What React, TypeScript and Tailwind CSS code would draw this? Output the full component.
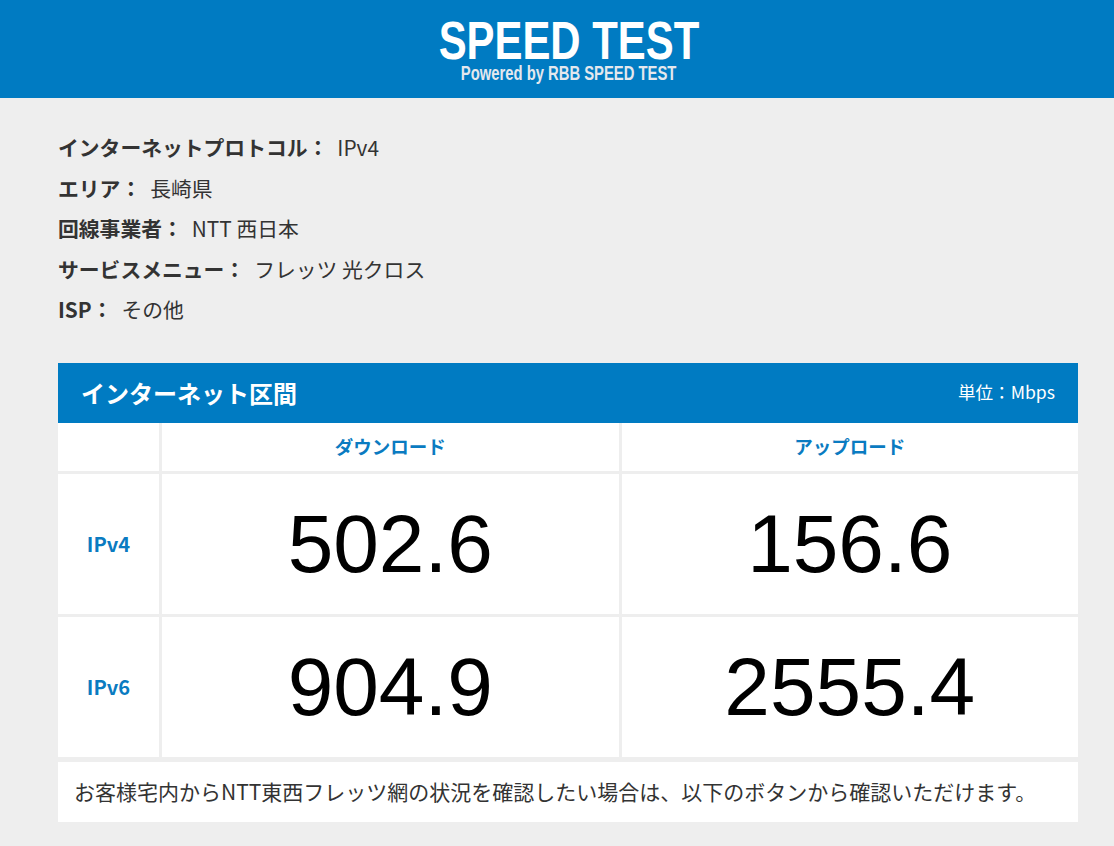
import React from "react";

const jp = { fontFamily: '"Noto Sans CJK JP", "Noto Sans", sans-serif' };
const logo = { fontFamily: '"Liberation Sans", Arial, sans-serif' };

const info: [string, string][] = [
  ["インターネットプロトコル：", "IPv4"],
  ["エリア：", "長崎県"],
  ["回線事業者：", "NTT 西日本"],
  ["サービスメニュー：", "フレッツ 光クロス"],
  ["ISP：", "その他"],
];

const rows: [string, string, string][] = [
  ["IPv4", "502.6", "156.6"],
  ["IPv6", "904.9", "2555.4"],
];

export default function App() {
  return (
    <div className="min-h-screen bg-[#eeeeee] text-[#333333]" style={jp}>
      <header className="h-[98px] bg-[#007bc2] flex flex-col items-center pt-[19px] pl-[23px]">
        <div
          className="text-white font-bold text-[53px] leading-[44px] scale-x-[0.79] whitespace-nowrap"
          style={logo}
        >
          SPEED TEST
        </div>
        <div
          className="text-[#e4e8ee] font-bold text-[20px] leading-[18px] mt-[1px] scale-x-[0.74] whitespace-nowrap"
          style={logo}
        >
          Powered by RBB SPEED TEST
        </div>
      </header>

      <main className="px-[58px] pt-[29px] pb-[26px]">
        <ul className="text-[20.8px] leading-[40.5px]">
          {info.map(([k, v]) => (
            <li key={k}>
              <span className="font-bold">{k}</span>
              <span className="ml-[9px]">{v}</span>
            </li>
          ))}
        </ul>

        <section className="mt-[33px] w-[1020px]">
          <div className="h-[60px] bg-[#007bc2] flex items-center justify-between pl-[23px] pr-[23px] text-white">
            <span className="font-bold text-[24px]">インターネット区間</span>
            <span className="text-[17.6px]">単位：Mbps</span>
          </div>
          <div className="grid grid-cols-[101px_1fr_1fr] gap-[3px] bg-[#eeeeee]">
            <div className="bg-white h-[48px]" />
            <div className="bg-white h-[48px] flex items-center justify-center text-[#0a7bc1] font-bold text-[18.5px]">
              ダウンロード
            </div>
            <div className="bg-white h-[48px] flex items-center justify-center text-[#0a7bc1] font-bold text-[18.5px]">
              アップロード
            </div>
            {rows.map(([label, down, up]) => (
              <React.Fragment key={label}>
                <div className="bg-white h-[140px] flex items-center justify-center text-[#0a7bc1] font-bold text-[20px]">
                  {label}
                </div>
                <div
                  className="bg-white h-[140px] flex items-center justify-center text-black text-[82px] leading-none"
                  style={{ fontFamily: '"Liberation Sans", Arial, sans-serif' }}
                >
                  {down}
                </div>
                <div
                  className="bg-white h-[140px] flex items-center justify-center text-black text-[82px] leading-none"
                  style={{ fontFamily: '"Liberation Sans", Arial, sans-serif' }}
                >
                  {up}
                </div>
              </React.Fragment>
            ))}
          </div>
          <div className="mt-[5px] h-[60px] bg-white flex items-center pl-[16px] text-[21px]">
            お客様宅内からNTT東西フレッツ網の状況を確認したい場合は、以下のボタンから確認いただけます。
          </div>
        </section>
      </main>
    </div>
  );
}
